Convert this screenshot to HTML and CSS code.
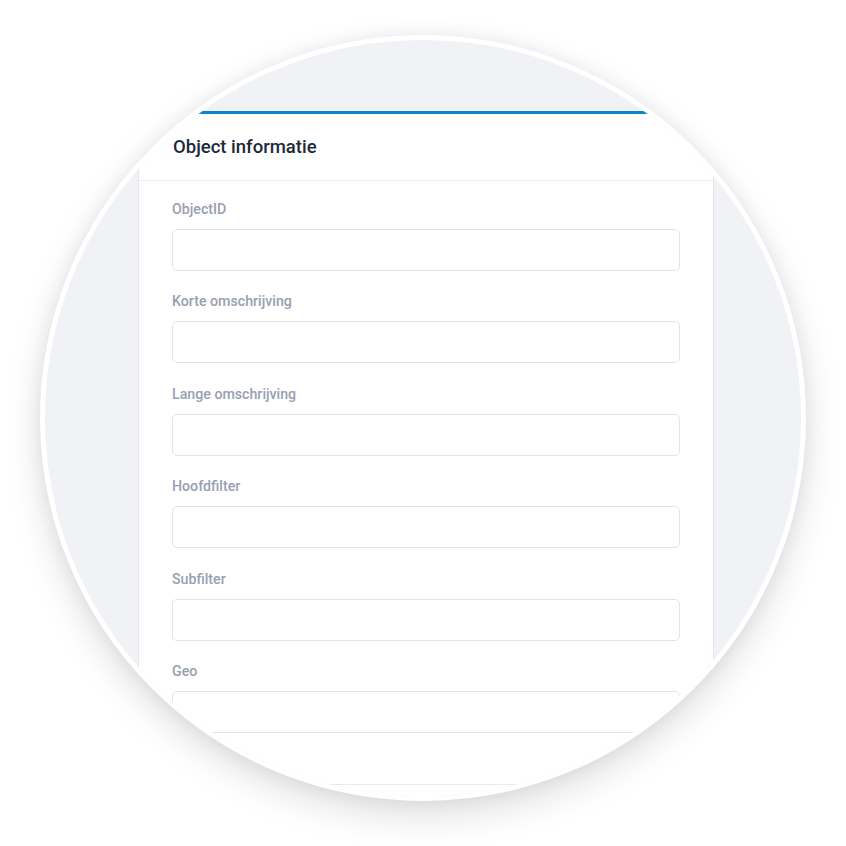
FILE: index.html
```html
<!DOCTYPE html>
<html lang="nl">
<head>
  <meta charset="UTF-8" />
  <title>Object informatie</title>
  <link rel="stylesheet" href="styles.css">
</head>
<body>
  <div class="stage">
    <div class="lens">
      <form class="card">
        <div class="card-head">Object informatie</div>
        <div class="card-body">
          <label>ObjectID</label>
          <input type="text" name="objectid" />

          <label>Korte omschrijving</label>
          <input type="text" name="kort" />

          <label>Lange omschrijving</label>
          <input type="text" name="lang" />

          <label>Hoofdfilter</label>
          <input type="text" name="hoofdfilter" />

          <label>Subfilter</label>
          <input type="text" name="subfilter" />

          <label>Geo</label>
          <input type="text" name="geo" />
        </div>
        <div class="card-foot"></div>
      </form>
    </div>
  </div>
</body>
</html>
```

FILE: styles.css
```css
body { margin: 0; background: #fff; font-family: Roboto, "Liberation Sans", sans-serif; }

.stage {
  width: 846px;
  height: 846px;
  padding: 35px 0 0 40px;
  box-sizing: border-box;
}

.lens {
  width: 766px;
  height: 766px;
  box-sizing: border-box;
  border: 5px solid #fff;
  border-radius: 50%;
  overflow: hidden;
  background: #f1f2f5;
  box-shadow: 0 14px 36px rgba(0,0,0,0.13), 0 0 18px rgba(0,0,0,0.06);
}

.card {
  width: 576px;
  margin: 71px 0 0 93px;
  background: #fff;
  border: 1px solid #e3e6eb;
  border-top: 3px solid #0a87c2;
  box-sizing: border-box;
}

.card-head {
  height: 66px;
  padding: 0 34px;
  display: flex;
  align-items: center;
  border-bottom: 1px solid #eceef2;
  font-size: 18.5px;
  font-weight: 500;
  color: #1d2939;
}

.card-body { padding: 20px 33px 29px; }

label {
  display: block;
  font-size: 14.2px;
  line-height: 17px;
  font-weight: 500;
  color: #97a0b3;
  margin-bottom: 11px;
}

input {
  display: block;
  width: 100%;
  height: 42px;
  box-sizing: border-box;
  margin: 0 0 22.4px;
  border: 1px solid #dfe3ea;
  border-radius: 5px;
  background: #fff;
}

.card-foot {
  height: 60px;
  border-top: 1px solid #e6e9ee;
}
```
